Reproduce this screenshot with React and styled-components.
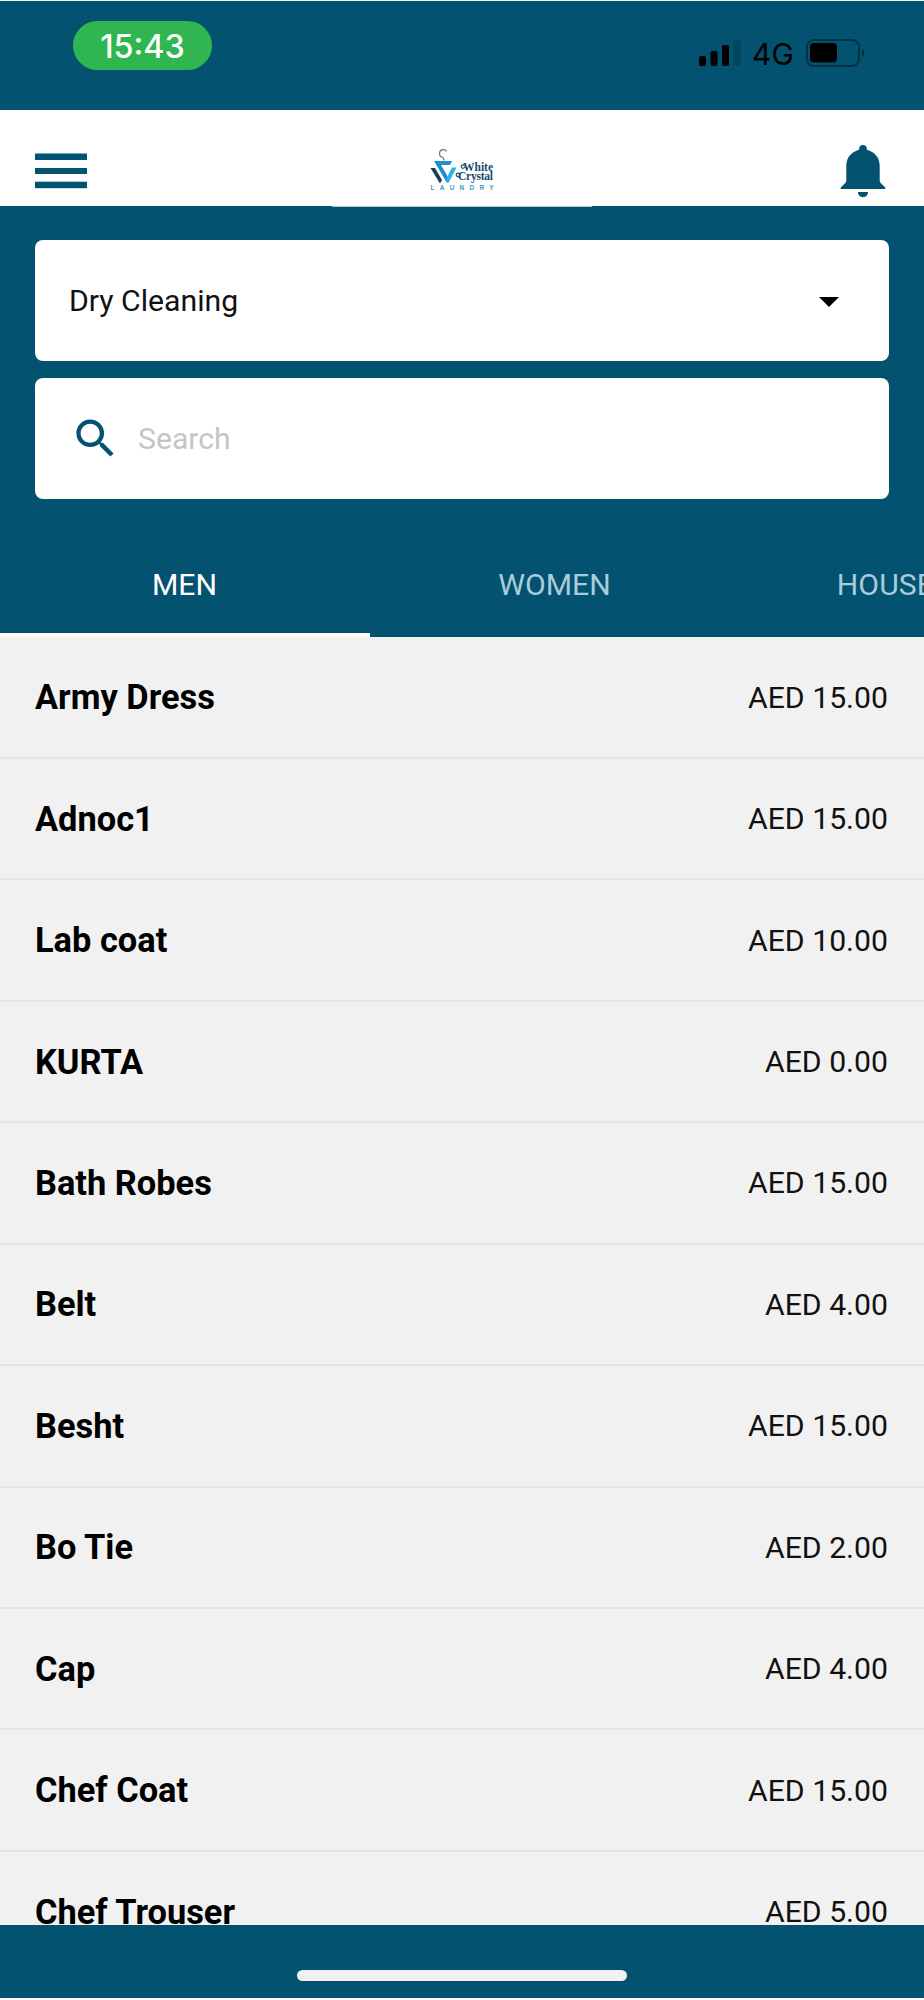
import React, { useState } from "react";
import styled, { createGlobalStyle } from "styled-components";
import { MdArrowDropDown, MdSearch } from "react-icons/md";

const items = [
    { name: "Army Dress", price: "15.00" },
    { name: "Adnoc1", price: "15.00" },
    { name: "Lab coat", price: "10.00" },
    { name: "KURTA", price: "0.00" },
    { name: "Bath Robes", price: "15.00" },
    { name: "Belt", price: "4.00" },
    { name: "Besht", price: "15.00" },
    { name: "Bo Tie", price: "2.00" },
    { name: "Cap", price: "4.00" },
    { name: "Chef Coat", price: "15.00" },
    { name: "Chef Trouser", price: "5.00" },
];

const tabs = ["MEN", "WOMEN", "HOUSEHOLD"];

const SignalIcon = () => (
    <svg width="42" height="28" viewBox="0 0 42 28">
        <rect x="0" y="17" width="7" height="10" rx="2" />
        <rect x="11.5" y="12" width="7" height="15" rx="2" />
        <rect x="23" y="6" width="7" height="21" rx="2" />
        <rect x="34.5" y="1" width="7" height="26" rx="2" opacity="0.15" />
    </svg>
);

const BatteryIcon = () => (
    <svg width="60" height="28" viewBox="0 0 60 28">
        <rect x="1" y="1" width="52" height="26" rx="7" fill="none" stroke="#000" strokeWidth="2" opacity="0.4" />
        <rect x="4" y="4" width="27" height="19.5" rx="4" />
        <path d="M56 10c3 1 3 7 0 8z" opacity="0.45" />
    </svg>
);

const MenuIcon = () => (
    <svg width="52" height="36" viewBox="0 0 52 36" fill="#03526f">
        <rect y="0.5" width="52" height="6.5" />
        <rect y="15" width="52" height="6" />
        <rect y="28.7" width="52" height="6.5" />
    </svg>
);

const BellIcon = () => (
    <svg width="46" height="54" viewBox="0 0 46 54" fill="#03526f">
        <path d="M23 1c-2.300 0-3.900 1.500-3.900 3.700v1.100C11.500 7.700 6.300 13.500 6.300 22v14.500c0 1.200-.5 2-1.400 2.900L1 43.200c-.8.900-.4 1.800.8 1.800h42.400c1.200 0 1.600-.9.800-1.800l-3.900-3.800c-.9-.9-1.400-1.700-1.400-2.900V22c0-8.500-5.200-14.300-12.800-16.200V4.700C26.900 2.500 25.300 1 23 1z" />
        <path d="M18 48h10c0 3.200-2.200 5.200-5 5.200s-5-2-5-5.200z" />
    </svg>
);

const Logo = () => (
    <svg width="68" height="50" viewBox="0 0 68 50">
        <path d="M16.500 7.500C15.500 5 10.500 4.800 9.600 8.500c-.7 3 1 4.500 3 4.900 1.200.3 1.400 1.600 1.400 3" fill="none" stroke="#64788a" strokeWidth="1.300" />
        <path d="M4 17h18l-2 4h-9l8.500 14.500-2.500 3.500z" fill="#1d8fd0" />
        <path d="M22 23.500h4.500L18.500 39l-2.500-3.500z" fill="#27b4e6" />
        <path d="M0.500 24h4.500l7 12-2 3.500z" fill="#143f5c" />
        <LogoText x="33" y="27" textLength="30">White</LogoText>
        <LogoText x="28" y="36" textLength="35">Crystal</LogoText>
        {/* swashes on the two capitals */}
        <path d="M34.500 21.500c-2.500-1.500-4 .5-3 2s3 .8 3-.8M30 30c-2.500-2-4.500 0-3.500 1.800s3.500 1.200 3.500-.4" fill="none" stroke="#184a6b" strokeWidth="1.200" />
        <LogoTag x="0.500" y="46" textLength="63">LAUNDRY</LogoTag>
    </svg>
);

const App = () => {
    const [activeTab, setActiveTab] = useState(0);

    return (
        <>
            <GlobalStyle />
            <Screen>
                <StatusBar>
                    <Time>15:43</Time>
                    <StatusIcons>
                        <SignalIcon />
                        <Network>4G</Network>
                        <BatteryIcon />
                    </StatusIcons>
                </StatusBar>
                <Header>
                    <MenuIcon />
                    <Logo />
                    <BellIcon />
                </Header>
                <Filters>
                    <Field>
                        <Selected>Dry Cleaning</Selected>
                        <MdArrowDropDown size={48} color="#000" />
                    </Field>
                    <Field $search>
                        <MdSearch size={51} color="#03526f" />
                        <Placeholder>Search</Placeholder>
                    </Field>
                </Filters>
                <Tabs>
                    {tabs.map((tab, index) => (
                        <Tab key={tab} $active={index === activeTab} onClick={() => setActiveTab(index)}>
                            {tab}
                        </Tab>
                    ))}
                </Tabs>
                <List>
                    {items.map((item) => (
                        <Row key={item.name}>
                            <Name>{item.name}</Name>
                            <Price>AED {item.price}</Price>
                        </Row>
                    ))}
                </List>
                <BottomBar>
                    <HomeIndicator />
                </BottomBar>
            </Screen>
        </>
    );
};

export default App;

const GlobalStyle = createGlobalStyle`
    * {
        box-sizing: border-box;
    }

    body {
        margin: 0;
        background-color: #fff;
    }

    svg {
        display: block;
        flex-shrink: 0;
    }
`;

const Screen = styled.div`
    width: 924px;
    height: 2000px;
    padding: 1px 0 2px;
    overflow: hidden;
    display: flex;
    flex-direction: column;
    background-color: #fff;
    color: #111;
    font-family: Roboto, "Liberation Sans", sans-serif;
    font-size: 30.2px;
`;

const StatusBar = styled.div`
    height: 109px;
    flex-shrink: 0;
    padding: 20px 58px 0 73px;
    display: flex;
    align-items: flex-start;
    justify-content: space-between;
    background-color: #03526f;
`;

const Time = styled.div`
    width: 139px;
    height: 49px;
    border-radius: 25px;
    background-color: #30b650;
    color: #fff;
    font-family: Inter, sans-serif;
    font-size: 32.3px;
    font-weight: 500;
    line-height: 51px;
    text-align: center;
`;

const StatusIcons = styled.div`
    height: 28px;
    margin-top: 18px;
    display: flex;
    align-items: center;
    color: #000;
`;

const Network = styled.div`
    width: 65px;
    font-family: Inter, sans-serif;
    font-size: 30px;
    line-height: 28px;
    padding: 1px 0 0 11px;
`;

const Header = styled.div`
    position: relative;
    height: 96px;
    flex-shrink: 0;
    padding: 34px 38px 0 35px;
    display: flex;
    align-items: flex-start;
    justify-content: space-between;

    > svg:first-child {
        margin-top: 9px;
    }

    /* bottom lip of the title area */
    &::after {
        content: "";
        position: absolute;
        left: 332px;
        bottom: -1px;
        width: 260px;
        height: 1px;
        background-color: #b5ccd6;
    }
`;

const LogoText = styled.text`
    font-family: "Liberation Serif", serif;
    font-size: 11.5px;
    font-weight: 700;
    fill: #184a6b;
`;

const LogoTag = styled.text`
    font-family: "Liberation Sans", sans-serif;
    font-size: 6.5px;
    font-weight: 700;
    fill: #3d9dc4;
`;

const Filters = styled.div`
    padding: 34px 35px 0;
    display: flex;
    flex-direction: column;
    gap: 17px;
    background-color: #03526f;
`;

const Field = styled.div`
    height: 121px;
    padding: 0 36px 0 ${({ $search }) => ($search ? "35px" : "34px")};
    border-radius: 8px;
    display: flex;
    align-items: center;
    justify-content: ${({ $search }) => ($search ? "flex-start" : "space-between")};
    gap: 17px;
    background-color: #fff;
`;

const Selected = styled.span`
    padding-bottom: 1px;
`;

const Placeholder = styled.span`
    padding-bottom: 1px;
    color: #c5c5c5;
`;

const Tabs = styled.div`
    height: 138px;
    flex-shrink: 0;
    padding-top: 34px;
    display: flex;
    overflow: hidden;
    background-color: #03526f;
`;

const Tab = styled.div`
    width: 370px;
    flex-shrink: 0;
    padding: 2px 1px 0 0;
    display: flex;
    align-items: center;
    justify-content: center;
    border-bottom: 4px solid ${({ $active }) => ($active ? "#fff" : "transparent")};
    color: ${({ $active }) => ($active ? "#fff" : "#a9cbdb")};
    cursor: pointer;
`;

const List = styled.div`
    flex: 1;
    min-height: 0;
    padding-top: 0.5px;
    overflow: hidden;
    background-color: #f1f1f1;
`;

const Row = styled.div`
    height: 121.45px;
    padding: 0 36px 0 35px;
    display: flex;
    align-items: center;
    justify-content: space-between;
    border-bottom: 2px solid #e5e5e5;
`;

const Name = styled.div`
    color: #000;
    font-size: 34.4px;
    font-weight: 700;
`;

const Price = styled.div`
    color: #111;
`;

const BottomBar = styled.div`
    height: 73px;
    flex-shrink: 0;
    padding-top: 45px;
    background-color: #03526f;
`;

const HomeIndicator = styled.div`
    width: 330px;
    height: 11px;
    margin: 0 auto;
    border-radius: 6px;
    background-color: #f1f1f1;
`;
